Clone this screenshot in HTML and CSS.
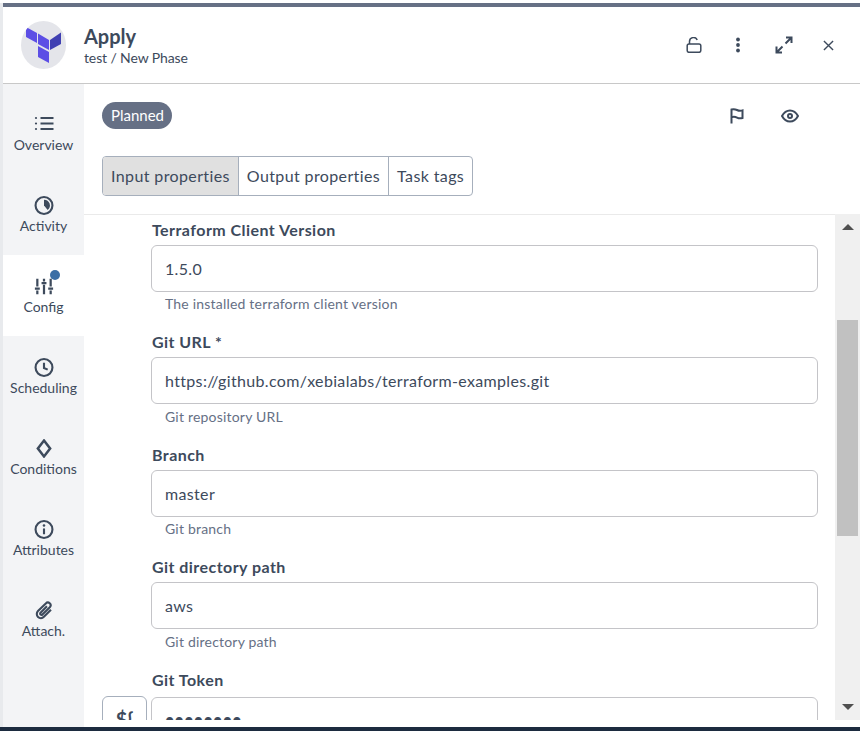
FILE: index.html
```html
<!DOCTYPE html>
<html lang="en">
<head>
<meta charset="utf-8">
<title>Apply</title>
<link rel="stylesheet" href="styles.css">
</head>
<body>
<div class="topgap"></div>
<div class="panel">
  <div class="topbar"></div>
  <header class="head">
    <div class="avatar">
      <svg width="45" height="48" viewBox="21 19 45 48"><path d="M26 25L37 31V41L26 35Z" fill="#5c4ee5"/><path d="M38 31.500L49 38V48L38 42Z" fill="#5c4ee5"/><path d="M50 38L61 30.500V42L50 48Z" fill="#4040b2"/><path d="M38 44L49 50V61L38 55Z" fill="#5c4ee5"/></svg>
    </div>
    <div class="titles">
      <div class="title">Apply</div>
      <div class="crumb">test / New Phase</div>
    </div>
    <div class="head-actions">
      <svg class="ic lock" viewBox="0 0 16 16"><path d="M3.500 7V4.500a4 4 0 0 1 7.700-1.500"/><rect x="1.200" y="7" width="13.600" height="8.300" rx="1.800"/></svg>
      <svg class="ic dots" viewBox="0 0 16 16"><circle cx="8" cy="2.500" r="1.900"/><circle cx="8" cy="8" r="1.900"/><circle cx="8" cy="13.500" r="1.900"/></svg>
      <svg class="ic expand" viewBox="0 0 18 18"><path class="thick" d="M10.500 7.500L16 2M11 1.500h5.500V7M7.500 10.500L2 16M1.500 10.500V16.500H7"/></svg>
      <svg class="ic close" viewBox="0 0 12 12"><path d="M1 1l10 10M11 1L1 11"/></svg>
    </div>
  </header>
  <div class="body">
    <nav class="side">
      <div class="tab"><svg class="ic nudge" viewBox="0 0 20 16"><path class="thick" d="M6.500 2.500H19.500M6.500 8H19.500M6.500 13.500H19.500"/><circle class="dot" cx="2" cy="2.500" r="1.100"/><circle class="dot" cx="2" cy="8" r="1.100"/><circle class="dot" cx="2" cy="13.500" r="1.100"/></svg><span>Overview</span></div>
      <div class="tab"><svg class="ic" viewBox="0 0 18 18"><circle class="thick" cx="9" cy="9" r="8"/><path class="dot" d="M9 3.500A5.500 5.500 0 0 1 12.500 13.300L9 9Z"/></svg><span>Activity</span></div>
      <div class="tab active"><i class="badge"></i><svg class="ic" viewBox="0 0 18 16"><path class="thick" d="M3 1v7M3 11.500V15M9 1v2.500M9 6.500V15M15 1v7M15 11.500V15M.8 10h4.400M6.800 5h4.400M12.800 10h4.400"/></svg><span>Config</span></div>
      <div class="tab"><svg class="ic" viewBox="0 0 18 18"><circle class="thick" cx="9" cy="9" r="8"/><path class="thick" d="M9 4.500V9.500L12.500 11"/></svg><span>Scheduling</span></div>
      <div class="tab"><svg class="ic" viewBox="0 0 14 18"><path class="thicker" d="M7 1.500L12.800 9L7 16.500L1.200 9Z"/></svg><span>Conditions</span></div>
      <div class="tab"><svg class="ic" viewBox="0 0 18 18"><circle class="thick" cx="9" cy="9" r="8"/><circle class="dot" cx="9" cy="5.300" r="1.200"/><path class="thick" d="M9 8V13.500"/></svg><span>Attributes</span></div>
      <div class="tab"><svg class="ic" viewBox="0 0 18 18"><path class="thick" d="M15.600 8.200L8.900 15a3.800 3.800 0 0 1-5.600-5.500L10.700 2.300a2.600 2.600 0 0 1 3.800 3.600L7.500 12.800a1.200 1.200 0 0 1-1.800-1.700L11.800 5"/></svg><span>Attach.</span></div>
    </nav>
    <main class="content">
      <div class="content-top">
        <div class="status-row">
          <span class="pill">Planned</span>
          <div class="status-actions">
            <svg class="ic flag" viewBox="0 0 14 16"><path class="thick" d="M1.500 15.500V1.500C3.500.8 5 1 7 2s3.500 1 5.500.4V10c-2 .6-3.500.6-5.500-.4s-3.500-1-5.500-.4"/></svg>
            <svg class="ic eye" viewBox="0 0 18 14"><path class="thick" d="M1 7c2-3.700 4.800-5.500 8-5.500S15 3.300 17 7c-2 3.700-4.800 5.500-8 5.500S3 10.700 1 7z"/><circle class="thick" cx="9" cy="7" r="2"/></svg>
          </div>
        </div>
        <div class="segments">
          <div class="seg on">Input properties</div>
          <div class="seg">Output properties</div>
          <div class="seg">Task tags</div>
        </div>
      </div>
      <div class="scroller">
        <div class="form">
          <div class="field">
            <label>Terraform Client Version</label>
            <div class="input">1.5.0</div>
            <p class="hint">The installed terraform client version</p>
          </div>
          <div class="field">
            <label>Git URL *</label>
            <div class="input">https://github.com/xebialabs/terraform-examples.git</div>
            <p class="hint">Git repository URL</p>
          </div>
          <div class="field">
            <label>Branch</label>
            <div class="input">master</div>
            <p class="hint">Git branch</p>
          </div>
          <div class="field">
            <label>Git directory path</label>
            <div class="input">aws</div>
            <p class="hint">Git directory path</p>
          </div>
          <div class="field">
            <label>Git Token</label>
            <div class="input-row">
              <div class="var-btn">${</div>
              <div class="input secret">••••••••</div>
            </div>
          </div>
        </div>
        <div class="scrollbar">
          <span class="arrow up"></span>
          <div class="track"><div class="thumb"></div></div>
          <span class="arrow down"></span>
        </div>
      </div>
    </main>
  </div>
</div>
<div class="bottom"></div>
</body>
</html>
```
FILE: styles.css
```css
* { box-sizing: border-box; }
html, body { margin: 0; height: 100%; overflow: hidden; }
body { width: 860px; height: 731px; background: #fff; font-family: Lato, sans-serif; color: #3d4a5c; display: flex; flex-direction: column; }
.topgap { height: 3px; flex: none; background: #fff; }
.panel { flex: 1; min-height: 0; display: flex; flex-direction: column; border-left: 3px solid #e8eaed; }
.topbar { height: 4px; flex: none; background: #667085; }
.head { height: 77px; flex: none; display: flex; align-items: center; padding: 0 0 0 18px; border-bottom: 1px solid #c8c8c8; background: #fff; }
.avatar { width: 45px; height: 48px; border-radius: 50%; background: #e4e5ea; overflow: hidden; flex: none; }
.avatar svg { display: block; }
.titles { margin-left: 18px; flex: 1; }
.title { font-size: 20px; font-weight: 700; line-height: 24px; color: #3d4a5c; }
.crumb { font-size: 14px; line-height: 18px; margin-top: 1px; letter-spacing: -.12px; color: #3d4a5c; }
.head-actions { display: flex; align-items: center; flex: none; }
.ic { fill: none; stroke: #3d4a5c; stroke-width: 1.500; display: block; flex: none; }
.thick { stroke-width: 2; fill: none; }
.thicker { stroke-width: 2.400; fill: none; }
.dot { fill: #3d4a5c; stroke: none; }
.lock { width: 16px; height: 16px; margin-right: 28px; }
.dots { width: 16px; height: 16px; margin-right: 29px; }
.dots circle { fill: #3d4a5c; stroke: none; }
.expand { width: 18px; height: 18px; margin-right: 30px; }
.close { width: 11px; height: 11px; margin-right: 26px; }
.body { flex: 1; min-height: 0; display: flex; }
.side { width: 81px; flex: none; background: #f3f4f6; padding-top: 9px; display: flex; flex-direction: column; }
.tab { height: 81px; flex: none; position: relative; display: flex; flex-direction: column; align-items: center; padding-top: 22px; font-size: 14px; line-height: 18px; color: #3d4a5c; }
.tab .ic { height: 19px; width: 20px; margin-bottom: 2px; }
.tab .nudge { margin-top: -1px; margin-bottom: 3px; }
.tab span { display: block; }
.tab.active { background: #fff; }
.badge { position: absolute; left: 47px; top: 15px; width: 10px; height: 10px; border-radius: 50%; background: #3a6ea5; }
.content { flex: 1; min-width: 0; display: flex; flex-direction: column; }
.content-top { height: 131px; flex: none; padding: 18px 0 0 18px; border-bottom: 1px solid #eaeaea; }
.status-row { display: flex; align-items: center; height: 27px; }
.pill { height: 27px; line-height: 26px; padding: 0 8px 0 9px; border-radius: 14px; background: #667085; color: #fff; font-size: 15px; }
.status-actions { margin-left: auto; display: flex; align-items: center; }
.flag { width: 14px; height: 16px; margin-right: 37px; }
.eye { width: 18px; height: 14px; margin-right: 61px; }
.segments { display: inline-flex; margin-top: 27px; border: 1px solid #a6afbc; border-radius: 4px; overflow: hidden; height: 40px; }
.seg { font-size: 16px; line-height: 38px; padding: 0 8px; letter-spacing: .38px; border-left: 1px solid #a6afbc; color: #3d4a5c; }
.seg:first-child { border-left: 0; }
.seg.on { background: #e0e0e0; }
.scroller { flex: 1; min-height: 0; display: flex; align-items: flex-start; overflow: visible; }
.form { flex: 1; min-width: 0; padding: 4.900px 17px 0 18px; overflow: hidden; height: 505px; }
.field { padding-left: 49px; height: 112.500px; }
.field label { display: block; padding-left: 1px; font-size: 16px; font-weight: 700; line-height: 20px; color: #3d4a5c; letter-spacing: .45px; }
.input { height: 47px; margin-top: 5px; border: 1px solid #c4c4c8; border-radius: 6px; padding: 0 13px; font-size: 16px; line-height: 46px; color: #3d4a5c; letter-spacing: .34px; background: #fff; }
.hint { margin: 3.300px 0 0 14px; font-size: 14px; line-height: 18px; letter-spacing: .2px; color: #667085; }
.input-row { display: flex; margin-left: -49px; gap: 4px; }
.var-btn { width: 45px; height: 47px; margin-top: 6px; border: 1px solid #a6afbc; border-radius: 6px; text-align: center; font-size: 20px; font-weight: 700; line-height: 44px; flex: none; }
.secret { flex: 1; margin-top: 7px; font-weight: 700; line-height: 42px; }
.scrollbar { width: 25px; flex: none; background: #f0f0f0; height: 506px; margin-top: -1px; display: flex; flex-direction: column; align-items: center; }
.arrow { width: 0; height: 0; flex: none; border-left: 6px solid transparent; border-right: 6px solid transparent; }
.arrow.up { border-bottom: 6px solid #505050; margin-top: 10px; }
.arrow.down { border-top: 6px solid #505050; margin-bottom: 10px; }
.track { flex: 1; width: 100%; padding: 0 2px; }
.thumb { height: 216px; margin-top: 90px; background: #c1c1c1; }
.bottom { height: 4px; flex: none; background: #1c2b3f; }
```
